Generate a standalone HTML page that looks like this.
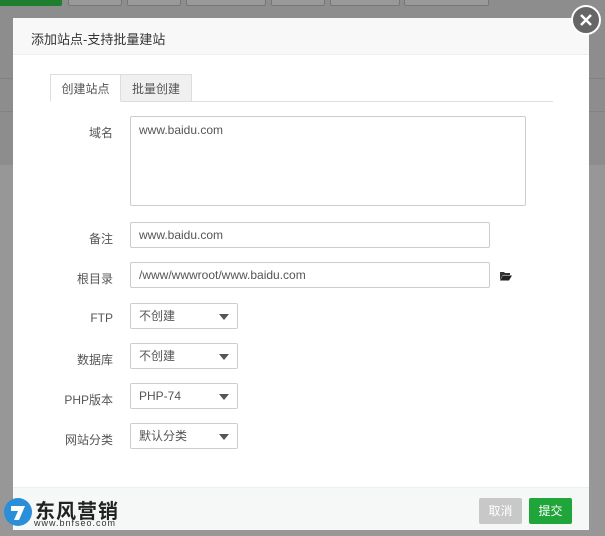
<!DOCTYPE html>
<html><head><meta charset="utf-8"><style>
*{margin:0;padding:0;box-sizing:border-box}
body{width:605px;height:536px;overflow:hidden;position:relative;background:#979797;font-family:"Liberation Sans","Noto Sans CJK SC",sans-serif;font-size:12px;color:#555}
.top{position:absolute;left:0;top:0;width:605px;height:165px;background:#8d8d8d}
.btn0{position:absolute;top:-4px;height:10px;border:1px solid #777;border-radius:2px;background:#999}
.dlg{position:absolute;left:13px;top:18px;width:576px;height:512px;background:#fff}
.hd{height:37px;background:#f8f8f8;border-bottom:1px solid #eee;padding:11px 0 0 18px;font-size:13px;color:#333}
.tabs{position:absolute;left:37px;top:56px;width:503px;height:28px;border-bottom:1px solid #ddd}
.tab{position:absolute;top:0;height:28px;width:71px;text-align:center;line-height:28px;border:1px solid #ddd;color:#555}
.lbl{position:absolute;width:100px;text-align:right;left:0;color:#555}
.inp{position:absolute;left:117px;border:1px solid #ccc;border-radius:2px;padding:0 8px;color:#555;line-height:24px}
.sel{width:108px;height:26px}
.sel:after{content:"";position:absolute;right:8px;top:10px;border:5px solid transparent;border-top:6px solid #555;border-bottom:0}
.ft{position:absolute;left:0;top:469px;width:576px;height:43px;background:#f6f8f8;border-top:1px solid #eee}
.b{position:absolute;top:10px;width:43px;height:26px;line-height:26px;text-align:center;color:#fff;border-radius:2px;font-size:12px}
.close{position:absolute;left:571px;top:5px;width:30px;height:30px;border-radius:50%;background:#666;border:2px solid #fff}
</style></head><body>
<div class="top">
<div class="btn0" style="left:-2px;width:64px;background:#1d7f2f;border-color:#1d7f2f"></div>
<div class="btn0" style="left:68px;width:54px"></div>
<div class="btn0" style="left:127px;width:54px"></div>
<div class="btn0" style="left:186px;width:80px"></div>
<div class="btn0" style="left:271px;width:54px"></div>
<div class="btn0" style="left:330px;width:70px"></div>
<div class="btn0" style="left:404px;width:85px"></div>
<div style="position:absolute;left:0;top:78px;width:605px;height:1px;background:#828282"></div>
<div style="position:absolute;left:0;top:111px;width:605px;height:1px;background:#828282"></div>
</div>
<div class="dlg">
<div class="hd">添加站点-支持批量建站</div>
<div class="tabs">
<div class="tab" style="left:0;border-bottom-color:#fff;background:#fff">创建站点</div>
<div class="tab" style="left:71px;background:#f0f0f0;border-left:0">批量创建</div>
</div>
<div class="lbl" style="top:106px">域名</div>
<div class="inp" style="top:98px;width:396px;height:90px;line-height:22px;padding-top:2px">www.baidu.com</div>
<div class="lbl" style="top:212px">备注</div>
<div class="inp" style="top:204px;width:360px;height:26px">www.baidu.com</div>
<div class="lbl" style="top:252px">根目录</div>
<div class="inp" style="top:244px;width:360px;height:26px">/www/wwwroot/www.baidu.com</div>
<svg style="position:absolute;left:487px;top:253px" width="12" height="10" viewBox="0 0 12 10"><path d="M0 1h4l1 1h5v2H3L0 9z" fill="#333"/><path d="M3 4.5h9l-3 5H0z" fill="#222"/></svg>
<div class="lbl" style="top:293px">FTP</div>
<div class="inp sel" style="top:285px">不创建</div>
<div class="lbl" style="top:333px">数据库</div>
<div class="inp sel" style="top:325px">不创建</div>
<div class="lbl" style="top:373px">PHP版本</div>
<div class="inp sel" style="top:365px">PHP-74</div>
<div class="lbl" style="top:413px">网站分类</div>
<div class="inp sel" style="top:405px">默认分类</div>
<div class="ft">
<div class="b" style="left:466px;background:#c8c8c8">取消</div>
<div class="b" style="left:516px;background:#20a53a">提交</div>
</div>
</div>
<div class="close"><svg width="26" height="26" viewBox="0 0 26 26"><path d="M8 8l10 10M18 8L8 18" stroke="#fff" stroke-width="2.5"/></svg></div>
<svg style="position:absolute;left:2px;top:496px" width="32" height="32" viewBox="0 0 32 32"><circle cx="16" cy="16" r="14" fill="#2a8fd8"/><path d="M9 10h14l-6 14h-5l4-9H9z" fill="#fff"/></svg>
<div style="position:absolute;left:35px;top:495px;font-size:20px;font-weight:bold;color:#222;letter-spacing:1px">东风营销</div>
<div style="position:absolute;left:34px;top:518px;font-size:9px;color:#333;letter-spacing:1px">www.bnfseo.com</div>
</body></html>
